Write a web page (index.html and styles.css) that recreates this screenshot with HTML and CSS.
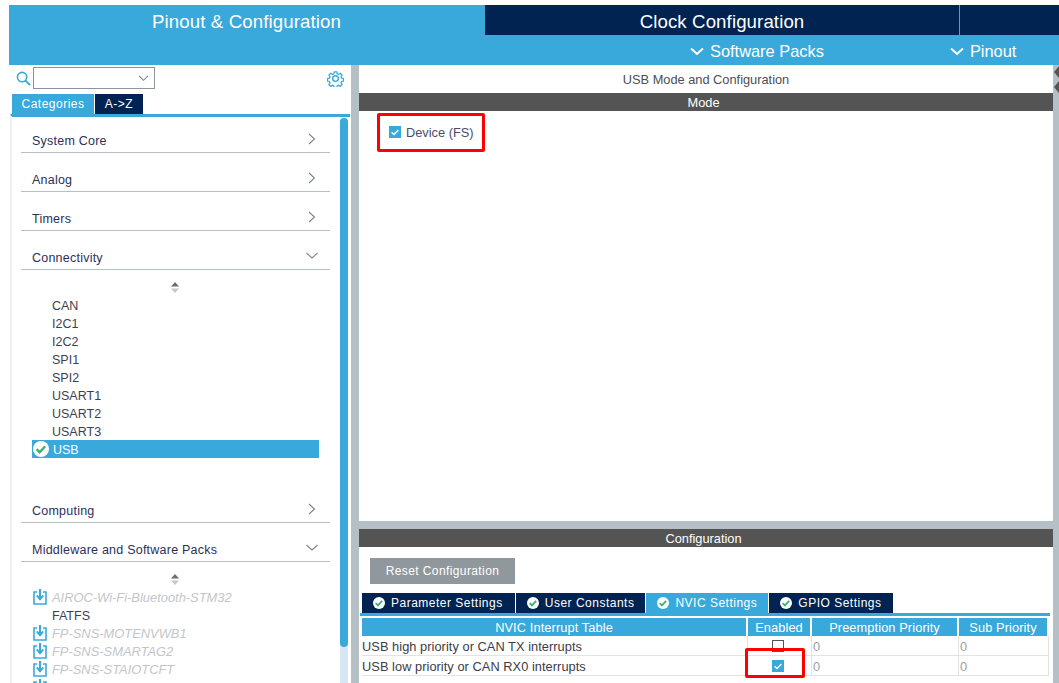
FILE: index.html
```html
<!DOCTYPE html>
<html lang="en">
<head>
  <meta charset="UTF-8" />
  <title>USB Mode and Configuration</title>
  <link rel="stylesheet" href="styles.css">
</head>
<body>
  <svg class="defs" width="0" height="0">
    <symbol id="ok" viewBox="0 0 16 16">
      <circle cx="8" cy="8" r="8" fill="#fff"/>
      <path d="M3.600 8.200l3 3 5.600-6" fill="none" stroke="#3cb371" stroke-width="2.400"/>
    </symbol>
    <symbol id="dl" viewBox="0 0 14 16">
      <path d="M4 3H1v12h12V3h-3" fill="none" stroke="#39a9dc" stroke-width="1.600"/>
      <path d="M7 0v9M3.800 6.400L7 10.200l3.200-3.800" fill="none" stroke="#39a9dc" stroke-width="2"/>
    </symbol>
    <symbol id="tick" viewBox="0 0 12 12">
      <rect width="12" height="12" fill="#39a9dc"/>
      <path d="M2.600 6.200l2.400 2.300 4.400-4.600" fill="none" stroke="#fff" stroke-width="1.400"/>
    </symbol>
    <symbol id="right" viewBox="-2 0 12 12">
      <path d="M1 1l5.500 5L1 11" fill="none" stroke="#7d8488" stroke-width="1.100"/>
    </symbol>
    <symbol id="down" viewBox="0 -2 12 12">
      <path d="M.5 1l5.500 5 5.500-5" fill="none" stroke="#7d8488" stroke-width="1.100"/>
    </symbol>
    <symbol id="sort" viewBox="0 0 10 11">
      <path d="M5 0l4 4.500H1z" fill="#6c6f70"/>
      <path d="M5 11L1 6.500h8z" fill="#c6c8c9"/>
    </symbol>
  </svg>

  <header class="topbar">
    <div class="main-tabs">
      <div class="main-tab active">Pinout &amp; Configuration</div>
      <div class="main-tab">Clock Configuration</div>
      <div class="main-tab blank"></div>
    </div>
    <div class="sub-menu">
      <div class="sub-item packs">
        <svg width="14" height="9" viewBox="0 0 14 9"><path d="M1 1.500l6 5.500 6-5.500" fill="none" stroke="#fff" stroke-width="2"/></svg>
        Software Packs
      </div>
      <div class="sub-item pinout">
        <svg width="14" height="9" viewBox="0 0 14 9"><path d="M1 1.500l6 5.500 6-5.500" fill="none" stroke="#fff" stroke-width="2"/></svg>
        Pinout
      </div>
    </div>
  </header>

  <div class="workspace">
    <aside class="sidebar">
      <div class="search-row">
        <svg class="search-icon" width="15" height="15" viewBox="0 0 16 16">
          <circle cx="6.500" cy="6.500" r="5" fill="none" stroke="#39a9dc" stroke-width="1.700"/>
          <path d="M10.200 10.200l4.800 4.800" stroke="#39a9dc" stroke-width="2"/>
        </svg>
        <div class="search-box">
          <svg width="11" height="7" viewBox="0 0 12 8"><path d="M1 1l5 5 5-5" fill="none" stroke="#7d8488" stroke-width="1.200"/></svg>
        </div>
        <svg class="gear" width="17" height="17" viewBox="0 0 24 24">
          <path d="M10 1.500h4l.6 3 2.300 1 2.600-1.700 2.800 2.800-1.700 2.600 1 2.300 3 .6v4l-3 .6-1 2.300 1.700 2.600-2.800 2.800-2.600-1.700-2.300 1-.6 3h-4l-.6-3-2.300-1-2.600 1.700-2.800-2.800 1.700-2.600-1-2.300-3-.6v-4l3-.6 1-2.300L1.700 6.600l2.800-2.800 2.600 1.700 2.300-1z" transform="translate(1.200 1.200) scale(.9)" fill="none" stroke="#39a9dc" stroke-width="2"/>
          <circle cx="12" cy="12" r="4" fill="none" stroke="#39a9dc" stroke-width="2"/>
        </svg>
      </div>
      <div class="side-tabs">
        <div class="side-tab active">Categories</div>
        <div class="side-tab">A-&gt;Z</div>
      </div>
      <div class="tree">
        <div class="scroll-track"><div class="scroll-thumb"></div></div>
        <div class="group first"><span>System Core</span><svg width="12" height="12"><use href="#right"/></svg></div>
        <div class="group"><span>Analog</span><svg width="12" height="12"><use href="#right"/></svg></div>
        <div class="group"><span>Timers</span><svg width="12" height="12"><use href="#right"/></svg></div>
        <div class="group"><span>Connectivity</span><svg width="12" height="12"><use href="#down"/></svg></div>
        <div class="sorter"><svg width="10" height="11"><use href="#sort"/></svg></div>
        <ul class="items conn">
          <li>CAN</li>
          <li>I2C1</li>
          <li>I2C2</li>
          <li>SPI1</li>
          <li>SPI2</li>
          <li>USART1</li>
          <li>USART2</li>
          <li>USART3</li>
          <li class="selected"><svg width="16" height="16"><use href="#ok"/></svg>USB</li>
        </ul>
        <div class="group computing"><span>Computing</span><svg width="12" height="12"><use href="#right"/></svg></div>
        <div class="group"><span>Middleware and Software Packs</span><svg width="12" height="12"><use href="#down"/></svg></div>
        <div class="sorter"><svg width="10" height="11"><use href="#sort"/></svg></div>
        <ul class="items">
          <li class="pack"><svg width="14" height="16"><use href="#dl"/></svg>AIROC-Wi-Fi-Bluetooth-STM32</li>
          <li>FATFS</li>
          <li class="pack"><svg width="14" height="16"><use href="#dl"/></svg>FP-SNS-MOTENVWB1</li>
          <li class="pack"><svg width="14" height="16"><use href="#dl"/></svg>FP-SNS-SMARTAG2</li>
          <li class="pack"><svg width="14" height="16"><use href="#dl"/></svg>FP-SNS-STAIOTCFT</li>
          <li class="pack"><svg width="14" height="16"><use href="#dl"/></svg>FP-SNS-STBOX1</li>
        </ul>
      </div>
    </aside>

    <main class="content">
      <section class="mode-pane">
        <div class="pane-title">USB Mode and Configuration</div>
        <div class="bar">Mode</div>
        <label class="device"><svg width="12" height="12"><use href="#tick"/></svg>Device (FS)</label>
        <div class="mark mark-device"></div>
      </section>

      <section class="config-pane">
        <div class="bar">Configuration</div>
        <button class="reset">Reset Configuration</button>
        <div class="cfg-tabs">
          <div class="cfg-tab wide"><svg width="12" height="12"><use href="#ok"/></svg>Parameter Settings</div>
          <div class="cfg-tab"><svg width="12" height="12"><use href="#ok"/></svg>User Constants</div>
          <div class="cfg-tab active"><svg width="12" height="12"><use href="#ok"/></svg>NVIC Settings</div>
          <div class="cfg-tab"><svg width="12" height="12"><use href="#ok"/></svg>GPIO Settings</div>
        </div>
        <table class="nvic">
          <tr>
            <th class="c-name">NVIC Interrupt Table</th>
            <th class="c-en">Enabled</th>
            <th class="c-pre">Preemption Priority</th>
            <th class="c-sub">Sub Priority</th>
          </tr>
          <tr>
            <td>USB high priority or CAN TX interrupts</td>
            <td class="check"><span class="box"></span></td>
            <td class="num">0</td>
            <td class="num">0</td>
          </tr>
          <tr>
            <td>USB low priority or CAN RX0 interrupts</td>
            <td class="check"><svg width="12" height="12"><use href="#tick"/></svg></td>
            <td class="num">0</td>
            <td class="num">0</td>
          </tr>
        </table>
        <div class="mark mark-enabled"></div>
      </section>
    </main>

    <div class="edge">
      <svg width="6" height="30" viewBox="0 0 6 30">
        <path d="M6 1L1 7l5 6zM6 16l-5 6 5 6z" fill="#535453"/>
      </svg>
    </div>
  </div>
</body>
</html>
```

FILE: styles.css
```css
* {
  box-sizing: border-box;
}
html, body {
  height: 100%;
}
body {
  margin: 0;
  padding: 5px 0 0 9px;
  overflow: hidden;
  background: #fff;
  color: #3c3f52;
  font-family: "Liberation Sans", Arial, sans-serif;
  font-size: 12.8px;
}
.defs {
  position: absolute;
}
svg {
  display: block;
  flex: none;
}

/* top bars */
.topbar {
  background: #39a9dc;
  color: #fff;
}
.main-tabs {
  display: flex;
  height: 30px;
}
.main-tab {
  width: 474px;
  padding-top: 6px;
  margin-right: 1px;
  background: #002352;
  font-size: 18.67px;
  letter-spacing: .1px;
  text-align: center;
}
.main-tab.active {
  width: 475px;
  background: #39a9dc;
}
.main-tab.blank {
  flex: 1;
  margin-right: 0;
}
.sub-menu {
  display: flex;
  height: 30px;
  padding-top: 3px;
  align-items: center;
  font-size: 16.4px;
}
.sub-item {
  display: flex;
  align-items: center;
  gap: 6px;
}
.packs {
  margin-left: 681px;
}
.pinout {
  margin-left: 126px;
}

/* main area */
.workspace {
  display: flex;
  height: 618px;
  background: #b4bfc6;
}
.sidebar {
  width: 342px;
  margin-right: 8px;
  background: #fff;
  display: flex;
  flex-direction: column;
}
.search-row {
  display: flex;
  align-items: center;
  height: 24px;
  padding: 2px 7px 0 7px;
}
.search-box {
  width: 122px;
  height: 22px;
  margin-left: 2px;
  border: 1px solid #8e9499;
  display: flex;
  align-items: center;
  justify-content: flex-end;
  padding-right: 5px;
}
.gear {
  margin-left: auto;
}
.side-tabs {
  display: flex;
  margin: 5px 0 0 3px;
  height: 20px;
  gap: 1px;
  font-size: 12px;
  letter-spacing: .5px;
  color: #fff;
}
.side-tab {
  background: #002352;
  padding-top: 3px;
  width: 48px;
  text-align: center;
}
.side-tab.active {
  background: #39a9dc;
  width: 82px;
}
.tree {
  position: relative;
  flex: 1;
  margin: 0 1px;
  border-top: 3px solid #39a9dc;
  border-left: 2px solid #f0f0f0;
  overflow: hidden;
}
.scroll-track {
  position: absolute;
  right: 2px;
  top: 1px;
  bottom: 0;
  width: 8px;
  background: #d6e6f3;
  border-radius: 4px 4px 0 0;
}
.scroll-thumb {
  height: 529px;
  background: #39a9dc;
  border-radius: 4px;
}
.group {
  display: flex;
  justify-content: space-between;
  align-items: flex-end;
  width: 309px;
  height: 39px;
  margin-left: 9px;
  padding: 0 12px 4px 11px;
  border-bottom: 1px solid #b4bfc6;
  color: #2c2f5a;
  font-size: 12.5px;
  letter-spacing: .23px;
}
.group.first {
  height: 36px;
}
.group svg {
  margin-bottom: 3px;
}
.sorter {
  display: flex;
  justify-content: center;
  width: 301px;
  margin-left: 12px;
  padding-top: 12px;
  height: 26px;
}
.items {
  list-style: none;
  margin: 0;
  padding: 0 0 0 20px;
  width: 307px;
}
.items li {
  display: flex;
  align-items: center;
  height: 18px;
  padding: 1px 0 0 20px;
  font-size: 12.5px;
}
.items li.selected {
  padding-left: 1px;
  gap: 4px;
  background: #39a9dc;
  color: #fff;
}
.items li.selected svg {
  margin-top: -1px;
}
.items li.pack {
  padding: 0 0 0 1px;
  gap: 5px;
  color: #c2c6ca;
  font-size: 12.9px;
  font-style: italic;
}
.group.computing {
  margin-top: 26px;
}

/* right side */
.content {
  width: 694px;
  display: flex;
  flex-direction: column;
  gap: 8px;
}
.mode-pane,
.config-pane {
  position: relative;
  background: #fff;
}
.mode-pane {
  height: 456px;
}
.config-pane {
  flex: 1;
}
.pane-title {
  height: 28px;
  padding-top: 7px;
  text-align: center;
  color: #4d4f55;
}
.bar {
  height: 18px;
  line-height: 19px;
  padding-right: 5px;
  background: #535453;
  color: #fff;
  text-align: center;
}
.device {
  display: flex;
  align-items: center;
  gap: 5px;
  margin: 15px 0 0 30px;
  height: 12px;
  color: #4b4b6a;
}
.mark {
  position: absolute;
  border: 3px solid #f00;
  border-radius: 2px;
}
.mark-device {
  left: 18px;
  top: 48px;
  width: 108px;
  height: 39px;
}
.mark-enabled {
  left: 386px;
  top: 119px;
  width: 60px;
  height: 30px;
}
.reset {
  display: block;
  width: 145px;
  height: 26px;
  margin: 11px 0 9px 11px;
  padding: 0;
  border: 0;
  background: #90979d;
  color: #fff;
  font: inherit;
  font-size: 12px;
  letter-spacing: .4px;
}
.cfg-tabs {
  display: flex;
  height: 23px;
  margin: 0 3px 0 1px;
  padding-left: 2px;
  border-bottom: 3px solid #39a9dc;
  color: #fff;
  font-size: 12px;
  letter-spacing: .5px;
}
.cfg-tab {
  display: flex;
  align-items: center;
  gap: 6px;
  height: 20px;
  padding: 0 11px;
  margin-right: 1px;
  background: #002352;
}
.cfg-tab.wide {
  padding-right: 12px;
}
.cfg-tab.active {
  background: #39a9dc;
}
.nvic {
  border-collapse: separate;
  border-spacing: 0;
  margin: 2px 0 0 3px;
  table-layout: fixed;
  width: 687px;
}
.nvic th {
  height: 18px;
  padding: 0;
  font-weight: normal;
  background: #39a9dc;
  color: #fff;
  border-right: 2px solid #fff;
  letter-spacing: .1px;
}
.nvic td {
  height: 20px;
  padding: 1px 0 0;
  border-bottom: 1px solid #e2e3e4;
  border-right: 1px solid #e2e3e4;
  color: #3c3c46;
  letter-spacing: .05px;
}
.c-name { width: 386px; }
.c-en { width: 64px; }
.c-pre { width: 147px; }
.nvic td.check svg,
.box {
  margin: 0 0 1px 24px;
}
.box {
  display: block;
  width: 12px;
  height: 12px;
  border: 1px solid #555;
}
.nvic td.num {
  padding-left: 1px;
  color: #9a9fa5;
}

.edge {
  flex: 1;
}
```
